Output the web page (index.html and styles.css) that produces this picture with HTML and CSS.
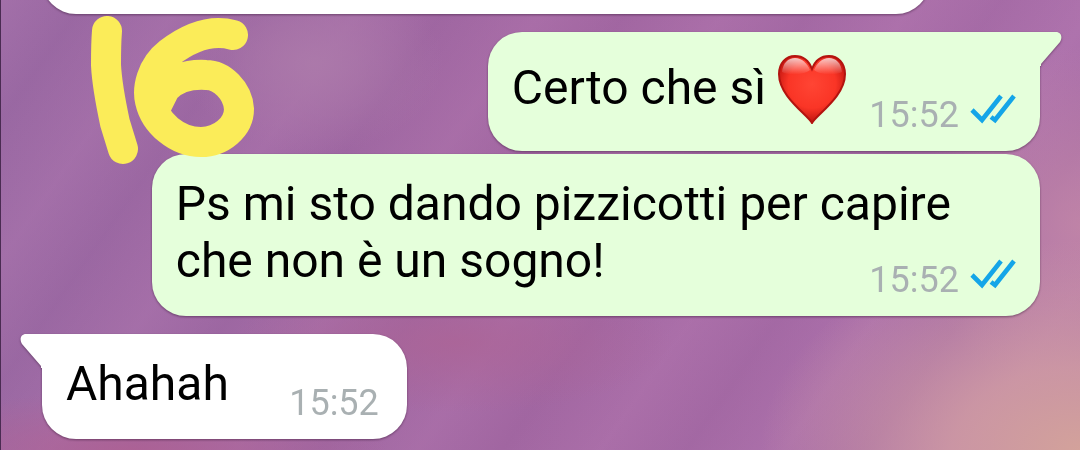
FILE: index.html
```
<!DOCTYPE html>
<html lang="it">
<head>
    <meta charset="utf-8">
    <title>Chat</title>
    <link rel="stylesheet" href="styles.css">
</head>
<body>

<svg class="defs" aria-hidden="true">
    <symbol id="ticks" viewBox="0 0 46 30">
        <path d="M2 16L12 26L31 2M21 23L25 26L44 2" fill="none" stroke="#14a5e8" stroke-width="4.6"/>
    </symbol>
    <symbol id="tail" viewBox="0 0 22 34">
        <path d="M0 0H16C21 0 23 5 20 10L1 32V34H0Z" fill="currentColor"/>
    </symbol>
</svg>

<main class="chat">
    <div class="bubble in previous"></div>

    <div class="bubble out first">
        <svg class="tail"><use href="#tail"/></svg>
        <p class="text">Certo che sì <svg class="heart" viewBox="0 0 70 70" role="img" aria-label="cuore rosso">
            <defs>
                <radialGradient id="heartFill" cx="50%" cy="42%" r="60%">
                    <stop offset="0" stop-color="#ff4534"/>
                    <stop offset="0.6" stop-color="#fa3526"/>
                    <stop offset="1" stop-color="#b8100c"/>
                </radialGradient>
                <linearGradient id="heartShine" x1="0" y1="0" x2="0" y2="1">
                    <stop offset="0" stop-color="#fff" stop-opacity="0.75"/>
                    <stop offset="1" stop-color="#fff" stop-opacity="0"/>
                </linearGradient>
            </defs>
            <path d="M34 69C30 61 1 43 1 20C1 9 8 2 17 2C25 2 31 7 34 15C37 7 43 2 51 2C60 2 67 9 67 20C67 43 38 61 34 69Z" fill="url(#heartFill)" stroke="#b3130f" stroke-width="2"/>
            <path d="M4 18C5 9 10 4 17 4C24 4 29 9 32 16C26 21 10 22 4 18Z" fill="url(#heartShine)"/>
            <path d="M64 18C63 9 58 4 51 4C44 4 39 9 36 16C42 21 58 22 64 18Z" fill="url(#heartShine)"/>
        </svg></p>
        <span class="meta"><time>15:52</time><svg class="ticks"><use href="#ticks"/></svg></span>
    </div>

    <div class="bubble out">
        <p class="text">Ps mi sto dando pizzicotti per capire che non è un sogno!</p>
        <span class="meta"><time>15:52</time><svg class="ticks"><use href="#ticks"/></svg></span>
    </div>

    <div class="bubble in first">
        <svg class="tail"><use href="#tail"/></svg>
        <p class="text">Ahahah</p>
        <span class="meta"><time>15:52</time></span>
    </div>
</main>

<!-- hand-drawn 16 -->
<svg class="doodle" viewBox="0 0 170 150" role="img" aria-label="16">
    <path d="M18 16C17 28 17 40 17 50C18 70 23 94 26 108L34 134"/>
    <path d="M144 20C122 14 101 22 80 38C62 52 58 74 61 86C66 108 88 127 112 127C132 127 150 112 150 94C149 76 133 60 117 60C99 59 86 63 76 74L67 92"/>
</svg>

</body>
</html>
```
FILE: styles.css
```
* {
    box-sizing: border-box;
}
body {
    margin: 0;
    min-height: 100vh;
    overflow: hidden;
    position: relative;
    font-family: Roboto, sans-serif;
    color: #000;
    border-left: 1px solid #4a2b52;
    background:
        radial-gradient(ellipse 320px 210px at 100% 100%, #d3a29b 0%, rgba(210, 158, 162, 0.8) 40%, rgba(196, 140, 170, 0) 100%),
        radial-gradient(ellipse 160px 180px at 100% 50%, rgba(196, 136, 166, 0.8), rgba(196, 136, 166, 0)),
        radial-gradient(ellipse 260px 60px at 12% 100%, rgba(176, 96, 146, 0.8), rgba(176, 96, 146, 0)),
        radial-gradient(ellipse 220px 70px at 42% 76%, rgba(172, 100, 150, 0.8), rgba(172, 100, 150, 0)),
        radial-gradient(ellipse 130px 90px at 29% 14%, rgba(172, 122, 170, 0.9), rgba(172, 122, 170, 0)),
        repeating-linear-gradient(125deg, rgba(184, 124, 182, 0.3) 0, rgba(152, 96, 160, 0.2) 70px, rgba(184, 124, 182, 0.3) 150px),
        linear-gradient(100deg, #996aa3, #a367a1 50%, #ab70aa);
}
.defs {
    display: none;
}
.chat {
    display: flex;
    flex-direction: column;
    gap: 3px;
    margin-top: -91px;
    padding: 0 40px 12px 41px;
}
.bubble {
    display: grid;
    position: relative;
    max-width: 89%;
    min-height: 105px;
    padding: 21px 24px 27px;
    border-radius: 34px;
    filter: drop-shadow(0 1px 1px rgba(50, 20, 50, 0.5));
}
.in {
    align-self: flex-start;
    padding-right: 28px;
    background: #fff;
    color: #fff;
}
.out {
    align-self: flex-end;
    background: #e5ffdb;
    color: #e5ffdb;
}
.previous {
    width: 89%;
}
.first {
    margin-top: 15px;
}
.in.first {
    border-top-left-radius: 0;
}
.out.first {
    border-top-right-radius: 0;
}

/* text and time share one cell, the time sits in the bottom corner */
.text,
.meta {
    grid-area: 1 / 1;
}
.text {
    margin: 0;
    font-size: 48px;
    line-height: 57px;
    color: #000;
}
/* keeps room for the time on the last line */
.text::after {
    content: "";
    display: inline-block;
    width: 168px;
}
.in .text::after {
    width: 150px;
}
.meta {
    display: flex;
    align-items: flex-start;
    gap: 11px;
    place-self: end;
    margin-bottom: -12px;
    font-size: 36px;
    line-height: 42px;
    color: #a9b0b2;
}
.ticks {
    width: 46px;
    height: 30px;
}
.heart {
    width: 70px;
    height: 70px;
    margin-top: 1px;
    vertical-align: -20px;
}
.tail {
    position: absolute;
    top: 0;
    left: 100%;
    width: 22px;
    height: 34px;
}
.in .tail {
    left: auto;
    right: 100%;
    transform: scaleX(-1);
}
.doodle {
    position: absolute;
    top: 15px;
    left: 88px;
    width: 170px;
    height: 150px;
    fill: none;
    stroke: #fbec59;
    stroke-width: 30px;
    stroke-linecap: round;
    stroke-linejoin: round;
}
```
